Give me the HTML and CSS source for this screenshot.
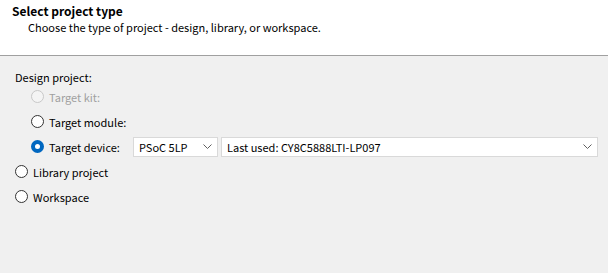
FILE: index.html
```html
<!DOCTYPE html>
<html lang="en">
<head>
    <meta charset="UTF-8">
    <title>New Project</title>
    <link rel="stylesheet" href="styles.css">
</head>
<body>
    <header class="banner">
        <div class="banner-title">Select project type</div>
        <div class="banner-sub">Choose the type of project - design, library, or workspace.</div>
    </header>
    <main class="panel">
        <div class="group-label">Design project:</div>
        <div class="sub-options">
            <label class="radio disabled"><span class="dot"></span>Target kit:</label>
            <label class="radio"><span class="dot"></span>Target module:</label>
            <div class="radio-row">
                <label class="radio"><span class="dot checked"></span>Target device:</label>
                <div class="combo family">
                    <span>PSoC 5LP</span>
                    <svg class="chev" width="9" height="5" viewBox="0 0 9 5"><path d="M0.5 0.5 L4.5 4.5 L8.5 0.5" fill="none" stroke="#606060" stroke-width="1"/></svg>
                </div>
                <div class="combo device">
                    <span>Last used: CY8C5888LTI-LP097</span>
                    <svg class="chev" width="9" height="5" viewBox="0 0 9 5"><path d="M0.5 0.5 L4.5 4.5 L8.5 0.5" fill="none" stroke="#606060" stroke-width="1"/></svg>
                </div>
            </div>
        </div>
        <label class="radio top"><span class="dot"></span>Library project</label>
        <label class="radio top"><span class="dot"></span>Workspace</label>
    </main>
</body>
</html>
```

FILE: styles.css
```css
body {
    margin: 0;
    font-family: "Noto Sans CJK JP", "Noto Sans", sans-serif;
    font-size: 11px;
    color: #000;
    background: #f0f0f0;
    width: 608px;
    height: 273px;
    overflow: hidden;
}

.banner {
    background: #fff;
    height: 56px;
    border-bottom: 1px solid #a0a0a0;
    box-sizing: border-box;
    padding: 3px 0 0 12px;
}

.banner-title {
    font-weight: bold;
    font-size: 12px;
    line-height: 16px;
}

.banner-sub {
    padding-left: 16px;
    line-height: 16px;
}

.panel {
    padding: 15px 0 0 15px;
}

.group-label {
    line-height: 13px;
}

.sub-options {
    padding-left: 16px;
    display: flex;
    flex-direction: column;
}

.radio {
    display: flex;
    align-items: center;
    height: 25px;
    gap: 5px;
}

.radio.disabled {
    color: #a0a0a0;
}

.dot {
    width: 11px;
    height: 11px;
    border: 1px solid #333;
    border-radius: 50%;
    background: #fff;
    box-sizing: content-box;
    flex: none;
}

.disabled .dot {
    border-color: #c8c8c8;
    background: #f4f4f4;
}

.dot.checked {
    border: 4px solid #0067c0;
    width: 5px;
    height: 5px;
    background: #fff;
}

.radio-row {
    display: flex;
    align-items: center;
    height: 25px;
}

.radio-row .radio {
    width: 102px;
    flex: none;
}

.combo {
    height: 20px;
    box-sizing: border-box;
    background: #fff;
    border: 1px solid #d9d9d9;
    display: flex;
    align-items: center;
    justify-content: space-between;
    padding: 0 5px 0 5px;
    flex: none;
}

.family {
    width: 85px;
    margin-right: 3px;
}

.device {
    width: 377px;
}

.chev {
    flex: none;
}
```
